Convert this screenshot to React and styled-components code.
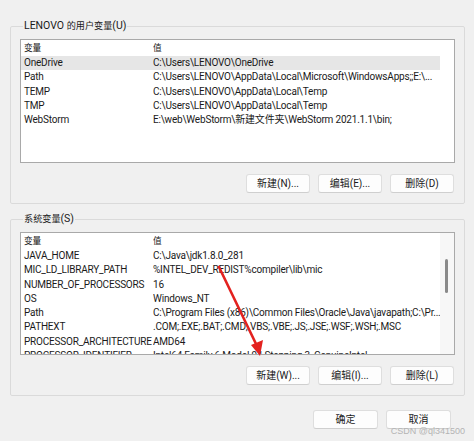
import React from "react";
import styled, { createGlobalStyle } from "styled-components";

const Global = createGlobalStyle`
  html, body {
    margin: 0;
    padding: 0;
    background: #f0f0f0;
  }
  body {
    font-family: Roboto, "Noto Sans CJK SC", sans-serif;
    font-size: 10px;
    color: #1a1a1a;
  }
`;

const userVars = [
  ["OneDrive", "C:\\Users\\LENOVO\\OneDrive"],
  ["Path", "C:\\Users\\LENOVO\\AppData\\Local\\Microsoft\\WindowsApps;;E:\\..."],
  ["TEMP", "C:\\Users\\LENOVO\\AppData\\Local\\Temp"],
  ["TMP", "C:\\Users\\LENOVO\\AppData\\Local\\Temp"],
  ["WebStorm", "E:\\web\\WebStorm\\新建文件夹\\WebStorm 2021.1.1\\bin;"],
];

const sysVars = [
  ["JAVA_HOME", "C:\\Java\\jdk1.8.0_281"],
  ["MIC_LD_LIBRARY_PATH", "%INTEL_DEV_REDIST%compiler\\lib\\mic"],
  ["NUMBER_OF_PROCESSORS", "16"],
  ["OS", "Windows_NT"],
  ["Path", "C:\\Program Files (x86)\\Common Files\\Oracle\\Java\\javapath;C:\\Pr..."],
  ["PATHEXT", ".COM;.EXE;.BAT;.CMD;.VBS;.VBE;.JS;.JSE;.WSF;.WSH;.MSC"],
  ["PROCESSOR_ARCHITECTURE", "AMD64"],
  ["PROCESSOR_IDENTIFIER", "Intel64 Family 6 Model 94 Stepping 3, GenuineIntel"],
];

function App() {
  return (
    <Window>
      <Global />
      <Group>
        <Legend>
          LENOVO <Cjk>的用户变量</Cjk>(U)
        </Legend>
        <ListBox $h={122}>
          <Rows>
            <Row $head>
              <Name>
                <Cjk>变量</Cjk>
              </Name>
              <Value>
                <Cjk>值</Cjk>
              </Value>
            </Row>
            {userVars.map(([n, v], i) => (
              <Row key={n} $selected={i === 0}>
                <Name>{n}</Name>
                <Value>{v}</Value>
              </Row>
            ))}
          </Rows>
        </ListBox>
        <Buttons>
          <Button>新建(N)...</Button>
          <Button>编辑(E)...</Button>
          <Button>删除(D)</Button>
        </Buttons>
      </Group>

      <Group $second>
        <Legend>
          <Cjk>系统变量</Cjk>(S)
        </Legend>
        <ListBox $h={121}>
          <Rows>
            <Row $head>
              <Name>
                <Cjk>变量</Cjk>
              </Name>
              <Value>
                <Cjk>值</Cjk>
              </Value>
            </Row>
            {sysVars.map(([n, v]) => (
              <Row key={n}>
                <Name>{n}</Name>
                <Value>{v}</Value>
              </Row>
            ))}
          </Rows>
          <ScrollTrack>
            <Thumb />
          </ScrollTrack>
        </ListBox>
        <Buttons>
          <Button>新建(W)...</Button>
          <Button>编辑(I)...</Button>
          <Button>删除(L)</Button>
        </Buttons>
      </Group>

      <Footer>
        <Button $wide>确定</Button>
        <Button $wide>取消</Button>
      </Footer>

      <Arrow width="474" height="441" viewBox="0 0 474 441">
        <line x1="219" y1="267" x2="257" y2="346" stroke="#e3221f" strokeWidth="2.6" strokeLinecap="round" />
        <polygon points="260,356 251,345 263,340" fill="#e3221f" />
      </Arrow>
      <Watermark>CSDN @ql341500</Watermark>
    </Window>
  );
}

const Window = styled.div`
  position: relative;
  width: 474px;
  height: 441px;
  box-sizing: border-box;
  padding: 19px 9px 0 10px;
  overflow: hidden;
  display: flex;
  flex-direction: column;
`;

const Group = styled.fieldset`
  margin: ${(p) => (p.$second ? "8px 0 0 0" : "0")};
  padding: 6px 9px 10px 9px;
  border: 1px solid #dadada;
  border-radius: 2px;
  min-width: 0;
`;

const Legend = styled.legend`
  padding: 0 1px;
  margin-left: 3px;
  font-size: 10.5px;
  line-height: 14px;
  color: #1a1a1a;
`;

const Cjk = styled.span`
  font-size: 0.87em;
`;

const ListBox = styled.div`
  position: relative;
  height: ${(p) => p.$h}px;
  background: #fff;
  border: 1px solid #a9a9a9;
  display: flex;
  overflow: hidden;
`;

const Rows = styled.div`
  flex: 1;
  display: flex;
  flex-direction: column;
  min-width: 0;
`;

const Row = styled.div`
  display: flex;
  flex: none;
  height: ${(p) => (p.$head ? "16px" : "14.3px")};
  line-height: ${(p) => (p.$head ? "16px" : "14.3px")};
  margin-right: 14px;
  background: ${(p) => (p.$selected ? "#e6e6e6" : "transparent")};
  white-space: nowrap;
  font-size: 10px;
  letter-spacing: -0.2px;
`;

const Name = styled.div`
  box-sizing: border-box;
  width: 132px;
  padding-left: 3px;
  flex: none;
  overflow: hidden;
`;

const Value = styled.div`
  flex: 1;
  overflow: hidden;
`;

const ScrollTrack = styled.div`
  position: absolute;
  right: 0;
  top: 0;
  bottom: 0;
  width: 14px;
  background: #f7f7f7;
`;

const Thumb = styled.div`
  position: absolute;
  left: 5px;
  top: 26px;
  width: 3px;
  height: 34px;
  background: #8a8a8a;
  border-radius: 2px;
`;

const Buttons = styled.div`
  display: flex;
  justify-content: flex-end;
  gap: 8px;
  margin-top: 11px;
  padding-right: 1px;
`;

const Button = styled.div`
  width: ${(p) => (p.$wide ? "63px" : "62px")};
  height: 17px;
  line-height: 17px;
  text-align: center;
  background: #fdfdfd;
  border: 1px solid #dedede;
  border-bottom-color: #cfcfcf;
  border-radius: 3px;
  font-size: 10px;
  color: #1a1a1a;
`;

const Footer = styled.div`
  display: flex;
  justify-content: flex-end;
  gap: 8px;
  margin-top: 14px;
  padding-right: 14px;
`;

const Arrow = styled.svg`
  position: absolute;
  left: 0;
  top: 0;
  pointer-events: none;
`;

const Watermark = styled.div`
  position: absolute;
  right: 9px;
  bottom: 5px;
  font-family: "Liberation Sans", sans-serif;
  font-size: 9px;
  color: #b4b4b4;
`;

export default App;
